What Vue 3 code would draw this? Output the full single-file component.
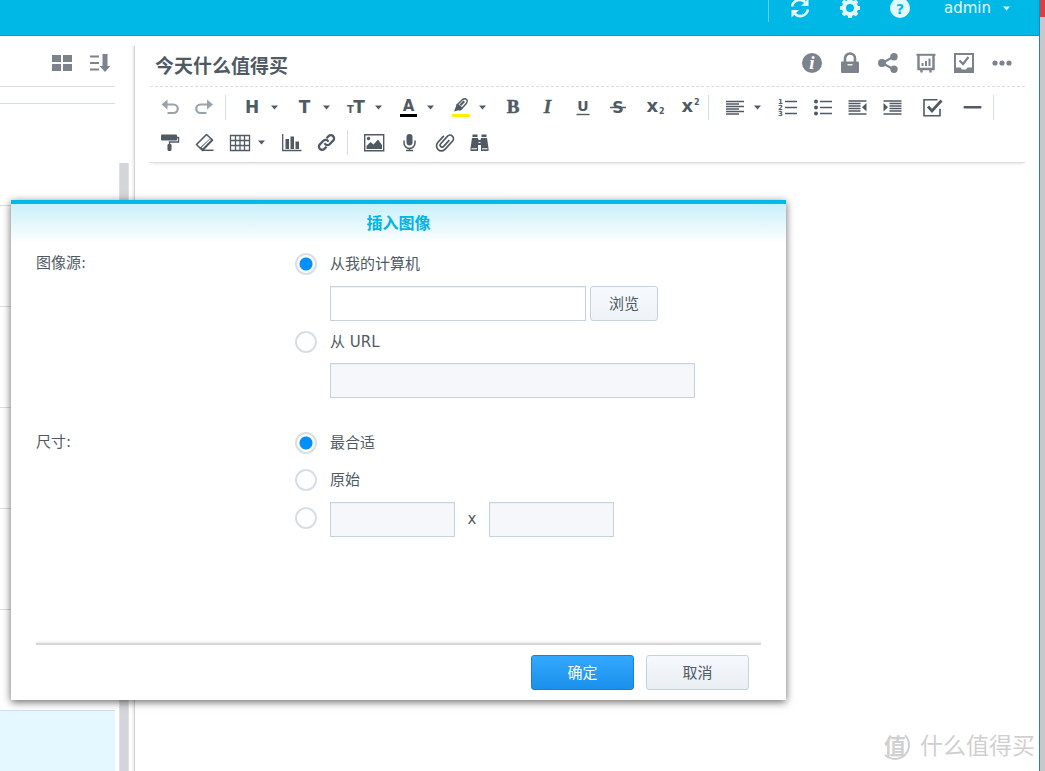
<script setup>
import { ref } from 'vue'

const source = ref('computer')
const size = ref('fit')
const notes = [1, 2, 3, 4, 5, 6, 7]

const caret = '<path d="M1 1.500h7L4.500 5.500z" fill="currentColor"/>'
const sans = 'font-family="DejaVu Sans, sans-serif" font-weight="700" text-anchor="middle" fill="currentColor"'
const serif = 'font-family="Liberation Serif, serif" font-weight="700" text-anchor="middle" fill="currentColor"'
const wide = 'font-family="DejaVu Sans, sans-serif" font-weight="700" fill="currentColor"'
const line = 'fill="none" stroke="currentColor"'

const tools = [
  { name: '撤销', muted: true, art: `<path d="M4.500 9.500L10.500 4.500v10z" fill="currentColor"/><path d="M9 9.500h7.500a4.200 4.200 0 0 1 0 8.500H10.500" ${line} stroke-width="2.200"/>` },
  { name: '重做', muted: true, art: `<path d="M21 9.500L15 4.500v10z" fill="currentColor"/><path d="M16 9.500H8.500a4.200 4.200 0 0 0 0 8.500H14.500" ${line} stroke-width="2.200"/>` },
  { sep: true },
  { name: '标题', menu: true, art: `<text x="12" y="18" font-size="17" ${sans}>H</text>` },
  { name: '字体', menu: true, art: `<text x="12.500" y="18" font-size="17" ${sans}>T</text>` },
  { name: '字号', menu: true, art: `<text x="6.500" y="18" font-size="10" ${sans}>T</text><text x="15" y="18" font-size="17" ${sans}>T</text>` },
  { name: '文字颜色', menu: true, art: `<text x="12.500" y="16" font-size="15" ${sans}>A</text><path d="M4 19h17v3H4z" fill="#000"/>` },
  { name: '突出显示', menu: true, art: `<path d="M9.500 9.500l5-5q2.500-1.500 4.300.3 1.200 1.500-.3 3.400l-4.500 5z" ${line} stroke-width="1.500"/><path d="M8.800 8.800l6 5-2.500 2-2-.5-4.300 1.200 1.500-4zM15.500 5.500l1.500 1.500-4 4-1.500-1.500z" fill="currentColor"/><path d="M4 19h18v3H4z" fill="#fff000"/>` },
  { name: '粗体', art: `<text x="13" y="18" font-size="19" ${serif} stroke="currentColor" stroke-width=".5">B</text>` },
  { name: '斜体', art: `<text x="12.500" y="18" font-size="19" font-style="italic" ${serif} stroke="currentColor" stroke-width=".4">I</text>` },
  { name: '下划线', art: `<text x="13" y="16" font-size="14" ${sans}>U</text><path d="M6.500 19.500h13" ${line} stroke-width="1.400"/>` },
  { name: '删除线', art: `<text x="13" y="18" font-size="16" ${sans}>S</text><path d="M5 12.500h16" ${line} stroke-width="1.500"/>` },
  { name: '下标', art: `<text x="6.500" y="17" font-size="18" ${wide}>x</text><text x="19" y="19" font-size="8" ${wide}>2</text>` },
  { name: '上标', art: `<text x="6.500" y="17" font-size="18" ${wide}>x</text><text x="19" y="10" font-size="8" ${wide}>2</text>` },
  { sep: true },
  { name: '对齐', menu: true, art: `<path d="M3 6.500h18M3 9h13M3 11.500h18M3 14h13M3 16.500h18M3 19h13" ${line} stroke-width="1.400"/>` },
  { name: '编号列表', art: `<path d="M10 6.500h12M10 12.500h12M10 18.500h12" ${line} stroke-width="1.600"/><g font-size="7" ${wide}><text x="3" y="9">1</text><text x="3" y="15">2</text><text x="3" y="21">3</text></g>` },
  { name: '项目列表', art: `<path d="M10 6.500h12M10 12.500h12M10 18.500h12" ${line} stroke-width="1.600"/><path d="M6 4.500a2 2 0 1 1 0 4 2 2 0 0 1 0-4zM6 10.500a2 2 0 1 1 0 4 2 2 0 0 1 0-4zM6 16.500a2 2 0 1 1 0 4 2 2 0 0 1 0-4z" fill="currentColor"/>` },
  { name: '减少缩进', art: `<path d="M3.500 6h18M3.500 8.500h12M3.500 11h12M3.500 13.500h12M3.500 16h12M3.500 19h18" ${line} stroke-width="1.400"/><path d="M21.500 8v8.500l-4.500-4.200z" fill="currentColor"/>` },
  { name: '增加缩进', art: `<path d="M3.500 6h18M9.500 8.500h12M9.500 11h12M9.500 13.500h12M9.500 16h12M3.500 19h18" ${line} stroke-width="1.400"/><path d="M3.500 8v8.500L8 12.300z" fill="currentColor"/>` },
  { name: '待办事项', apart: true, art: `<path d="M17.500 4.700H4v16h16v-7" ${line} stroke-width="1.600"/><path d="M8 11.500l4 4.500L21.500 5.500" ${line} stroke-width="2.800"/>` },
  { name: '水平线', apart: true, art: `<rect x="3.500" y="11" width="18" height="2.500" rx="1" fill="currentColor"/>` },
  { sep: true },
  { name: '格式刷', art: `<rect x="4" y="4.500" width="16" height="6" rx="1" fill="currentColor"/><path d="M20 7.500h1.500v4.500h-9v2.500" ${line} stroke-width="1.400"/><rect x="10.500" y="14" width="4" height="7" rx="1.200" fill="currentColor"/>` },
  { name: '清除格式', art: `<path d="M4.500 14.500L14.500 4.500l6 5.500L10.500 20.500z" ${line} stroke-width="1.600" stroke-linejoin="round"/><path d="M18.500 8l2.500 2.500-10 10-3.500-2.500z" fill="currentColor"/><path d="M10 18l8.500-8.500" stroke="#fff" stroke-width="1.300"/><path d="M10 20.300h11.500" ${line} stroke-width="1.500"/>` },
  { name: '表格', menu: true, art: `<path d="M3.500 5.500h19v15h-19zM3.500 10.500h19M3.500 15.500h19M8.500 5.500v15M13 5.500v15M17.500 5.500v15" ${line} stroke-width="1.300"/>` },
  { name: '图表', art: `<path d="M3.700 4v16.500h18.800" ${line} stroke-width="1.300"/><path d="M6.500 9h3.500v10H6.500zM11.500 6.500H15V19h-3.500zM16.500 11.500H20V19h-3.500z" fill="currentColor"/>` },
  { name: '链接', art: `<g transform="rotate(-45 12.500 12.500)" ${line} stroke-width="2.300"><path d="M9.500 15.500H6.500a3.200 3.200 0 0 1 0-6.400h5a3.200 3.200 0 0 1 3 4.200"/><path d="M15.500 9.500H18.500a3.200 3.200 0 0 1 0 6.400h-5a3.200 3.200 0 0 1-3-4.200"/></g>` },
  { sep: true },
  { name: '图像', art: `<path d="M2.700 4.700h19v16h-19z" ${line} stroke-width="1.400"/><circle cx="6.500" cy="8.500" r="1.700" fill="currentColor"/><path d="M4.500 19v-3l4-4 3 2.500 4.500-5 4 5.500v4z" fill="currentColor"/>` },
  { name: '录音', art: `<rect x="9.500" y="4" width="6" height="11.500" rx="3" fill="currentColor"/><path d="M7 10.500v2.500a5.500 5.500 0 0 0 11 0v-2.500M12.500 18.500v2.500" ${line} stroke-width="1.500"/><path d="M9 20.500h7" ${line} stroke-width="1.500"/>` },
  { name: '附件', art: `<g transform="rotate(42 12.500 12.500)"><path d="M14.500 7.500v8.500a2 2 0 0 1-4 0V6a3.500 3.500 0 0 1 7 0v11a5 5 0 0 1-10 0V8" ${line} stroke-width="1.700"/></g>` },
  { name: '查找', art: `<path d="M5.500 4.500h5V7h-5zM14.500 4.500h5V7h-5zM5 8h6l.5 2h2l.5-2h6l1.500 10v3h-7.500v-6h-3v6H3.500v-3z" fill="currentColor"/><path d="M4.500 18.800h5.500M15 18.800h5.500M11.500 12.500h2" stroke="#fff" stroke-width="1"/>` },
]

const actions = [
  { name: '信息', art: '<circle cx="11" cy="11" r="10" fill="currentColor"/><text x="11" y="17" font-family="Liberation Serif, serif" font-size="19" font-weight="700" font-style="italic" text-anchor="middle" fill="#fff">i</text>' },
  { name: '加密', art: '<path d="M6 10V6.500a5 5 0 0 1 10 0V10" fill="none" stroke="currentColor" stroke-width="2.600"/><rect x="2" y="9.500" width="18" height="11.500" rx="1" fill="currentColor"/><path d="M8.500 12.800h5" stroke="#fff" stroke-width="1.300"/>' },
  { name: '共享', art: '<path d="M17 4.500L5 11l12 6.500" fill="none" stroke="currentColor" stroke-width="2"/><circle cx="5" cy="11" r="4" fill="currentColor"/><circle cx="17" cy="4.700" r="3.700" fill="currentColor"/><circle cx="17" cy="17.300" r="3.700" fill="currentColor"/>' },
  { name: '演示', art: '<path d="M1.500 2.800h19" stroke="currentColor" stroke-width="2"/><path d="M3.500 3v14h15V3M6.500 17v3.500M15.500 17v3.500" fill="none" stroke="currentColor" stroke-width="2.400"/><path d="M6.500 11h2v3h-2zM10 9h2v5h-2zM13.500 6.500h2V14h-2z" fill="currentColor"/>' },
  { name: '任务', art: '<path d="M2 2h18v18H2z" fill="none" stroke="currentColor" stroke-width="2"/><path d="M2 15.500h5.500l1.500 2h4l1.500-2H20V20H2z" fill="currentColor"/><path d="M6.500 8.500l3.500 3.500 5.500-7" fill="none" stroke="currentColor" stroke-width="2.200"/>' },
  { name: '更多', art: '<circle cx="4" cy="11" r="2.600" fill="currentColor"/><circle cx="11" cy="11" r="2.600" fill="currentColor"/><circle cx="18" cy="11" r="2.600" fill="currentColor"/>' },
]

const system = [
  { name: '刷新', art: '<path d="M3 9.500a8 8 0 0 1 13.500-4.200M19 12.500a8 8 0 0 1-13.500 4.200" fill="none" stroke="currentColor" stroke-width="2.600"/><path d="M19.500 1.500v7.500H12zM2.500 20.500V13H10z" fill="currentColor"/>' },
  { name: '设置', art: '<circle cx="11" cy="11" r="6" fill="none" stroke="currentColor" stroke-width="4"/><path d="M9.200 1h3.600l.7 4h-5zM9.200 21h3.600l.7-4h-5zM1 9.200v3.600l4 .7v-5zM21 9.200v3.600l-4 .7v-5zM2.700 5.200l2.500-2.500 3.300 2.300L5 8.500zM19.300 5.200l-2.500-2.500L13.500 5 17 8.500zM2.700 16.800l2.500 2.500L8.500 17 5 13.500zM19.300 16.800l-2.500 2.500-3.300-2.300 3.500-3.500z" fill="currentColor"/>' },
  { name: '帮助', art: '<circle cx="11" cy="11" r="10" fill="currentColor"/><text x="11" y="16.500" font-family="DejaVu Sans, sans-serif" font-size="14" font-weight="700" text-anchor="middle" fill="#00b8e6">?</text>' },
]
</script>

<template>
  <div class="screen">
    <div class="window">
      <header class="topbar">
        <span class="topbar-line"></span>
        <button v-for="s in system" :key="s.name" class="sys" type="button" :aria-label="s.name">
          <svg width="22" height="22" viewBox="0 0 22 22" v-html="s.art"></svg>
        </button>
        <button class="user" type="button">
          <span>admin</span>
          <svg width="9" height="7" viewBox="0 0 9 7" v-html="caret"></svg>
        </button>
      </header>

      <div class="workspace">
        <aside class="sidebar">
          <div class="side-head">
            <button class="side-btn" type="button" aria-label="视图">
              <svg width="20" height="18" viewBox="0 0 20 18"><path d="M0 1h9v7H0zM11 1h9v7h-9zM0 10h9v7H0zM11 10h9v7h-9z" fill="currentColor" /></svg>
            </button>
            <button class="side-btn" type="button" aria-label="排序">
              <svg width="20" height="18" viewBox="0 0 20 18"><path d="M0 2.500h9M0 9h9M0 15.500h9" stroke="currentColor" stroke-width="2" /><path d="M12.500 0h5v12h3l-5.500 6-5.500-6h3z" fill="currentColor" /></svg>
            </button>
          </div>
          <div class="side-body">
            <ul class="notes">
              <li class="gap-row"></li>
              <li v-for="n in notes" :key="n" :class="['note', { selected: n === 7 }]"></li>
            </ul>
            <div class="scroll"></div>
          </div>
        </aside>

        <main class="editor">
          <div class="title-row">
            <h1>今天什么值得买</h1>
            <div class="actions">
              <button v-for="a in actions" :key="a.name" type="button" :aria-label="a.name">
                <svg width="22" height="22" viewBox="0 0 22 22" v-html="a.art"></svg>
              </button>
            </div>
          </div>
          <div class="toolbar">
            <template v-for="(t, i) in tools" :key="i">
              <span v-if="t.sep" class="sep"></span>
              <button v-else type="button" :aria-label="t.name" :class="['tool', { menu: t.menu, muted: t.muted, apart: t.apart }]">
                <svg class="glyph" width="25" height="25" viewBox="0 0 25 25" v-html="t.art"></svg>
                <svg v-if="t.menu" width="9" height="7" viewBox="0 0 9 7" v-html="caret"></svg>
              </button>
            </template>
          </div>
        </main>
      </div>

      <div class="watermark">
        <span class="mark">值</span>
        <span>什么值得买</span>
      </div>
    </div>
    <div class="behind"></div>

    <form class="dialog" role="dialog" aria-labelledby="dialog-title" @submit.prevent>
      <h2 id="dialog-title">插入图像</h2>
      <div class="body">
        <div class="group" role="radiogroup" aria-labelledby="source-label">
          <span id="source-label" class="group-label">图像源:</span>
          <div class="options">
            <label class="option"><input v-model="source" type="radio" name="source" value="computer" />从我的计算机</label>
            <div class="fields file">
              <input type="text" aria-label="文件" class="path" />
              <button type="button" class="btn browse">浏览</button>
            </div>
            <label class="option"><input v-model="source" type="radio" name="source" value="url" />从 URL</label>
            <div class="fields">
              <input type="text" aria-label="URL" class="url" :disabled="source !== 'url'" />
            </div>
          </div>
        </div>
        <div class="group" role="radiogroup" aria-labelledby="size-label">
          <span id="size-label" class="group-label">尺寸:</span>
          <div class="options sizes">
            <label class="option"><input v-model="size" type="radio" name="size" value="fit" />最合适</label>
            <label class="option"><input v-model="size" type="radio" name="size" value="original" />原始</label>
            <div class="custom">
              <input v-model="size" type="radio" name="size" value="custom" aria-label="自定义" />
              <input type="text" aria-label="宽" class="dim" :disabled="size !== 'custom'" />
              <span class="times">x</span>
              <input type="text" aria-label="高" class="dim" :disabled="size !== 'custom'" />
            </div>
          </div>
        </div>
      </div>
      <footer>
        <button type="submit" class="btn primary">确定</button>
        <button type="button" class="btn">取消</button>
      </footer>
    </form>
  </div>
</template>

<style>
body {
  overflow: hidden;
}
</style>

<style scoped>
.screen,
.screen * {
  box-sizing: border-box;
}
.screen {
  position: relative;
  display: flex;
  height: 100vh;
  overflow: hidden;
  background: #fff;
  color: #505a64;
  font: 15px/22px "Noto Sans", "Noto Sans CJK SC", sans-serif;
}
button {
  display: flex;
  align-items: center;
  justify-content: center;
  padding: 0;
  border: 0;
  background: none;
  color: inherit;
  font: inherit;
}
svg {
  display: block;
  flex: none;
}
.window {
  position: relative;
  display: flex;
  flex: 1;
  flex-direction: column;
  min-width: 0;
  border-right: 1px solid #2482cc;
}
.behind {
  width: 5px;
  background: #c8c8c8;
  border-top: 17px solid #dc3e42;
}

.topbar {
  display: flex;
  flex: none;
  justify-content: flex-end;
  align-items: flex-start;
  height: 36px;
  padding-right: 28px;
  background: #00b8e6;
  border-bottom: 1px solid #009fd1;
  color: #e3f8fe;
}
.topbar-line {
  width: 1px;
  height: 22px;
  margin-right: 6px;
  background: #5ccfee;
}
.sys {
  width: 50px;
  height: 16px;
}
.user {
  gap: 11px;
  height: 16px;
  margin-left: 19px;
  font-family: "DejaVu Sans", sans-serif;
  line-height: 16px;
}

.workspace {
  display: flex;
  flex: 1;
  min-height: 0;
  padding-top: 10px;
}
.sidebar {
  display: flex;
  flex: none;
  flex-direction: column;
  width: 135px;
  background: linear-gradient(90deg, transparent 131px, #ececec 134px, #d2d2d2 134px);
}
.side-head {
  display: flex;
  flex: none;
  justify-content: flex-end;
  gap: 8px;
  width: 115px;
  height: 41px;
  border-bottom: 1px solid #d3dfe9;
  color: #7c838c;
}
.side-btn {
  width: 30px;
  height: 34px;
}
.side-body {
  display: flex;
  flex: 1;
  gap: 4px;
  min-height: 0;
}
.notes {
  width: 115px;
  margin: 0;
  padding: 0;
  overflow: hidden;
  list-style: none;
}
.gap-row {
  height: 17px;
  border-bottom: 1px solid #d3dfe9;
}
.note {
  height: 101px;
  border-bottom: 1px solid #d3dfe9;
}
.gap-row + .note {
  height: 102px;
}
.note.selected {
  background: #e3f9ff;
}
.scroll {
  width: 10px;
  margin-top: 76px;
  background: #d4d5d8;
  border: solid #dfe0e1;
  border-width: 0 1px;
}

.editor {
  flex: 1;
  min-width: 0;
  padding: 0 14px 0 15px;
}
.title-row {
  display: flex;
  justify-content: space-between;
  align-items: center;
  height: 41px;
  padding: 0 4px 0 5px;
  border-bottom: 1px dashed #d5dee2;
}
h1 {
  margin: 0;
  font-size: 19px;
  line-height: 28px;
  font-weight: 700;
}
.actions {
  display: flex;
  align-self: flex-start;
  color: #7c838c;
}
.actions button {
  width: 38px;
  height: 34px;
}
.toolbar {
  display: flex;
  flex-wrap: wrap;
  padding: 3px 0 2px 2px;
  border-bottom: 1px solid #dadcdd;
  box-shadow: 0 3px 3px -2px #e4e4e4;
}
.tool {
  width: 35px;
  height: 35px;
}
.tool.menu {
  justify-content: flex-start;
  gap: 5px;
  width: 52px;
  padding-left: 5px;
}
.tool.muted {
  color: #9aa2aa;
}
.tool.apart {
  margin-left: 5px;
}
.sep {
  width: 1px;
  height: 25px;
  margin: 5px 9px 5px 3px;
  background: #d3dfe9;
}

.watermark {
  position: absolute;
  right: 4px;
  bottom: 9px;
  display: flex;
  align-items: center;
  gap: 10px;
  color: #d0d0d0;
  font-size: 23px;
  line-height: 34px;
}
.mark {
  width: 30px;
  height: 30px;
  border: 2px solid #d0d0d0;
  border-top-color: transparent;
  border-left-color: transparent;
  border-radius: 50%;
  font-size: 22px;
  font-weight: 700;
  line-height: 26px;
  text-align: center;
}

.dialog {
  position: absolute;
  top: 200px;
  left: 11px;
  display: flex;
  flex-direction: column;
  width: 775px;
  min-height: 500px;
  border-top: 4px solid #00b8e6;
  background: linear-gradient(#c9f0f9, #fff 40px);
  box-shadow: 0 2px 8px rgba(0, 0, 0, 0.6);
  font-family: "DejaVu Sans", "Noto Sans CJK SC", sans-serif;
}
h2 {
  margin: 0;
  color: #00b4e3;
  font-size: 16px;
  line-height: 40px;
  font-weight: 700;
  text-align: center;
}
.body {
  display: flex;
  flex: 1;
  flex-direction: column;
  gap: 33px;
  padding: 8px 25px 0;
}
.group {
  display: grid;
  grid-template-columns: 259px 1fr;
}
.option {
  display: flex;
  align-items: center;
  gap: 13px;
  height: 24px;
}
.fields {
  display: flex;
  gap: 4px;
  margin: 9px 0 9px 35px;
}
.fields.file {
  margin-top: 10px;
}
.fields:last-child {
  margin-bottom: 0;
}
.sizes .option {
  margin-bottom: 13px;
}
.sizes .option + .option {
  margin-bottom: 10px;
}
.custom {
  display: flex;
}
input[type="radio"] {
  appearance: none;
  flex: none;
  width: 22px;
  height: 22px;
  margin: 0;
  border: 2px solid #d6dee6;
  border-radius: 50%;
  background: #fff;
}
input[type="radio"]:checked {
  background: radial-gradient(circle, #0090f7 6px, #fff 7px);
}
.custom input[type="radio"] {
  margin: 5px 13px 0 0;
}
input[type="text"] {
  height: 35px;
  padding: 0 8px;
  border: 1px solid #c6d2de;
  border-radius: 0;
  background: #fff;
  box-shadow: inset 0 1px 1px #edf0f4;
  color: inherit;
  font: inherit;
}
input[type="text"]:disabled {
  background: #f5f7fa;
}
.path {
  width: 256px;
}
.url {
  width: 365px;
}
.dim {
  width: 125px;
}
.times {
  width: 34px;
  line-height: 35px;
  text-align: center;
}
.btn {
  width: 103px;
  height: 35px;
  border: 1px solid #c6d2de;
  border-radius: 3px;
  background: linear-gradient(#f6fafe, #e9eef3);
}
.btn.browse {
  width: 68px;
  background: linear-gradient(#f6fafe, #eef3f8);
}
.btn.primary {
  border-color: #1880d2;
  background: linear-gradient(#33a8ff, #1b90ea);
  color: #fff;
}
footer {
  display: flex;
  justify-content: flex-end;
  gap: 12px;
  margin: 0 25px;
  padding: 15px 12px 10px 0;
  background: linear-gradient(#fff, #eee 3px, #d6d6d6 3px, #d6d6d6 5px, #fff 5px);
}
</style>
